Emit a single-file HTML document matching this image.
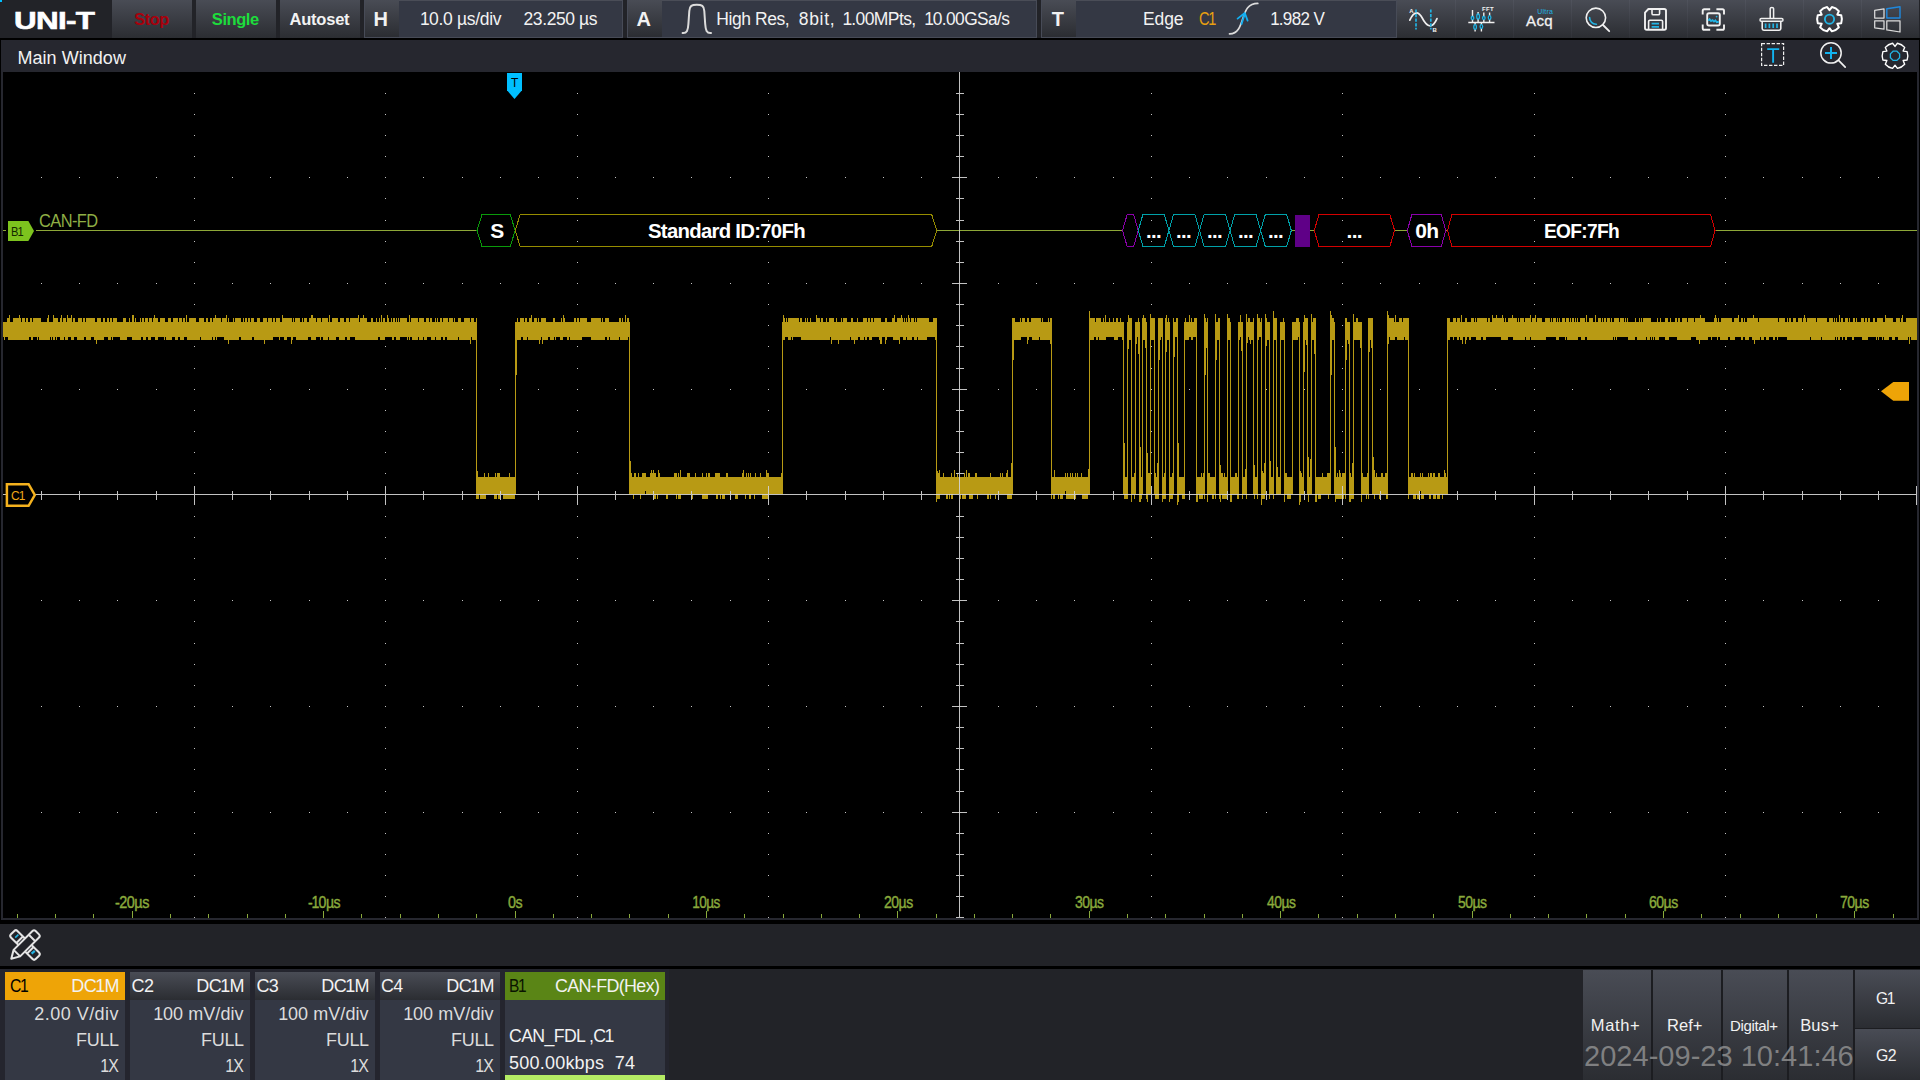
<!DOCTYPE html>
<html><head><meta charset="utf-8"><title>UNI-T Oscilloscope - Main Window</title>
<style>
html,body{margin:0;padding:0;background:#000;}
body{width:1920px;height:1080px;position:relative;overflow:hidden;font-family:"Liberation Sans",sans-serif;}
.b{position:absolute;}
.t{position:absolute;white-space:pre;font-family:"Liberation Sans",sans-serif;}
.plot{position:absolute;left:0;top:0;}
.n1{margin:0 -0.02em 0 -0.05em;}
</style></head><body>
<div class="b" style="left:0px;top:0px;width:1920px;height:38px;background:#222328;"></div>
<div class="b" style="left:112px;top:0px;width:80px;height:38px;background:linear-gradient(#494c55,#2b2d32);"></div>
<div class="b" style="left:196px;top:0px;width:80px;height:38px;background:linear-gradient(#494c55,#2b2d32);"></div>
<div class="b" style="left:280px;top:0px;width:80px;height:38px;background:linear-gradient(#494c55,#2b2d32);"></div>
<div class="b" style="left:0px;top:0px;width:2px;height:2px;background:#00bfff;"></div>
<div class="b" style="left:364px;top:0px;width:259px;height:38px;background:#474b57;"></div>
<div class="b" style="left:365px;top:0px;width:34px;height:37px;background:linear-gradient(#494c55,#2b2d32);"></div>
<div class="b" style="left:399px;top:1px;width:223px;height:36px;background:#343844;"></div>
<div class="b" style="left:399px;top:0px;width:223px;height:1px;background:#4a4d57;"></div>
<div class="b" style="left:627px;top:0px;width:410px;height:38px;background:#474b57;"></div>
<div class="b" style="left:628px;top:0px;width:34px;height:37px;background:linear-gradient(#494c55,#2b2d32);"></div>
<div class="b" style="left:662px;top:1px;width:374px;height:36px;background:#343844;"></div>
<div class="b" style="left:662px;top:0px;width:374px;height:1px;background:#4a4d57;"></div>
<div class="b" style="left:1041px;top:0px;width:356px;height:38px;background:#474b57;"></div>
<div class="b" style="left:1042px;top:0px;width:34px;height:37px;background:linear-gradient(#494c55,#2b2d32);"></div>
<div class="b" style="left:1076px;top:1px;width:320px;height:36px;background:#343844;"></div>
<div class="b" style="left:1076px;top:0px;width:320px;height:1px;background:#4a4d57;"></div>
<div class="b" style="left:1397px;top:0px;width:522px;height:38px;background:linear-gradient(#494c55,#2b2d32);"></div>
<div class="b" style="left:1455px;top:0px;width:1px;height:38px;background:linear-gradient(#50535d,#303238);"></div>
<div class="b" style="left:1513px;top:0px;width:1px;height:38px;background:linear-gradient(#50535d,#303238);"></div>
<div class="b" style="left:1571px;top:0px;width:1px;height:38px;background:linear-gradient(#50535d,#303238);"></div>
<div class="b" style="left:1629px;top:0px;width:1px;height:38px;background:linear-gradient(#50535d,#303238);"></div>
<div class="b" style="left:1687px;top:0px;width:1px;height:38px;background:linear-gradient(#50535d,#303238);"></div>
<div class="b" style="left:1745px;top:0px;width:1px;height:38px;background:linear-gradient(#50535d,#303238);"></div>
<div class="b" style="left:1803px;top:0px;width:1px;height:38px;background:linear-gradient(#50535d,#303238);"></div>
<div class="b" style="left:1861px;top:0px;width:1px;height:38px;background:linear-gradient(#50535d,#303238);"></div>
<div class="b" style="left:0px;top:38px;width:1920px;height:2px;background:#000;"></div>
<div class="b" style="left:1px;top:40px;width:1918px;height:880px;background:#26272f;"></div>
<div class="b" style="left:3px;top:72px;width:1914px;height:846px;background:#000;"></div>
<div class="b" style="left:0px;top:920px;width:1920px;height:4px;background:#000;"></div>
<div class="b" style="left:0px;top:924px;width:1920px;height:42px;background:#222328;"></div>
<div class="b" style="left:0px;top:966px;width:1920px;height:3px;background:#000;"></div>
<div class="b" style="left:0px;top:969px;width:1920px;height:111px;background:#222328;"></div>
<div class="b" style="left:0px;top:969px;width:669px;height:111px;background:#24252e;"></div>
<div class="b" style="left:5px;top:972px;width:120px;height:28px;background:#eea407;"></div>
<div class="b" style="left:5px;top:1000px;width:120px;height:80px;background:#343844;"></div>
<div class="b" style="left:130px;top:972px;width:120px;height:28px;background:linear-gradient(#494c55,#2b2d32);"></div>
<div class="b" style="left:130px;top:1000px;width:120px;height:80px;background:#343844;"></div>
<div class="b" style="left:255px;top:972px;width:120px;height:28px;background:linear-gradient(#494c55,#2b2d32);"></div>
<div class="b" style="left:255px;top:1000px;width:120px;height:80px;background:#343844;"></div>
<div class="b" style="left:380px;top:972px;width:120px;height:28px;background:linear-gradient(#494c55,#2b2d32);"></div>
<div class="b" style="left:380px;top:1000px;width:120px;height:80px;background:#343844;"></div>
<div class="b" style="left:505px;top:972px;width:160px;height:28px;background:#5a8516;"></div>
<div class="b" style="left:505px;top:1000px;width:160px;height:75px;background:#343844;"></div>
<div class="b" style="left:505px;top:1075px;width:160px;height:5px;background:#b4eb64;"></div>
<div class="b" style="left:1583px;top:970px;width:337px;height:110px;background:#1c1d21;"></div>
<div class="b" style="left:1583px;top:970px;width:68px;height:110px;background:linear-gradient(#494c55,#2b2d32);"></div>
<div class="b" style="left:1653px;top:970px;width:68px;height:110px;background:linear-gradient(#494c55,#2b2d32);"></div>
<div class="b" style="left:1723px;top:970px;width:64px;height:110px;background:linear-gradient(#494c55,#2b2d32);"></div>
<div class="b" style="left:1789px;top:970px;width:64px;height:110px;background:linear-gradient(#494c55,#2b2d32);"></div>
<div class="b" style="left:1855px;top:970px;width:65px;height:58px;background:linear-gradient(#494c55,#2b2d32);"></div>
<div class="b" style="left:1855px;top:1029px;width:65px;height:51px;background:linear-gradient(#494c55,#2b2d32);"></div>
<svg class="plot" width="1920" height="1080" viewBox="0 0 1920 1080" shape-rendering="crispEdges"><path d="M41 177h1v1h-1zM79 177h1v1h-1zM117 177h1v1h-1zM156 177h1v1h-1zM194 177h1v1h-1zM232 177h1v1h-1zM270 177h1v1h-1zM309 177h1v1h-1zM347 177h1v1h-1zM385 177h1v1h-1zM423 177h1v1h-1zM462 177h1v1h-1zM500 177h1v1h-1zM538 177h1v1h-1zM577 177h1v1h-1zM615 177h1v1h-1zM653 177h1v1h-1zM691 177h1v1h-1zM730 177h1v1h-1zM768 177h1v1h-1zM806 177h1v1h-1zM845 177h1v1h-1zM883 177h1v1h-1zM921 177h1v1h-1zM959 177h1v1h-1zM998 177h1v1h-1zM1036 177h1v1h-1zM1074 177h1v1h-1zM1113 177h1v1h-1zM1151 177h1v1h-1zM1189 177h1v1h-1zM1227 177h1v1h-1zM1266 177h1v1h-1zM1304 177h1v1h-1zM1342 177h1v1h-1zM1380 177h1v1h-1zM1419 177h1v1h-1zM1457 177h1v1h-1zM1495 177h1v1h-1zM1534 177h1v1h-1zM1572 177h1v1h-1zM1610 177h1v1h-1zM1648 177h1v1h-1zM1687 177h1v1h-1zM1725 177h1v1h-1zM1763 177h1v1h-1zM1802 177h1v1h-1zM1840 177h1v1h-1zM1878 177h1v1h-1zM41 283h1v1h-1zM79 283h1v1h-1zM117 283h1v1h-1zM156 283h1v1h-1zM194 283h1v1h-1zM232 283h1v1h-1zM270 283h1v1h-1zM309 283h1v1h-1zM347 283h1v1h-1zM385 283h1v1h-1zM423 283h1v1h-1zM462 283h1v1h-1zM500 283h1v1h-1zM538 283h1v1h-1zM577 283h1v1h-1zM615 283h1v1h-1zM653 283h1v1h-1zM691 283h1v1h-1zM730 283h1v1h-1zM768 283h1v1h-1zM806 283h1v1h-1zM845 283h1v1h-1zM883 283h1v1h-1zM921 283h1v1h-1zM959 283h1v1h-1zM998 283h1v1h-1zM1036 283h1v1h-1zM1074 283h1v1h-1zM1113 283h1v1h-1zM1151 283h1v1h-1zM1189 283h1v1h-1zM1227 283h1v1h-1zM1266 283h1v1h-1zM1304 283h1v1h-1zM1342 283h1v1h-1zM1380 283h1v1h-1zM1419 283h1v1h-1zM1457 283h1v1h-1zM1495 283h1v1h-1zM1534 283h1v1h-1zM1572 283h1v1h-1zM1610 283h1v1h-1zM1648 283h1v1h-1zM1687 283h1v1h-1zM1725 283h1v1h-1zM1763 283h1v1h-1zM1802 283h1v1h-1zM1840 283h1v1h-1zM1878 283h1v1h-1zM41 389h1v1h-1zM79 389h1v1h-1zM117 389h1v1h-1zM156 389h1v1h-1zM194 389h1v1h-1zM232 389h1v1h-1zM270 389h1v1h-1zM309 389h1v1h-1zM347 389h1v1h-1zM385 389h1v1h-1zM423 389h1v1h-1zM462 389h1v1h-1zM500 389h1v1h-1zM538 389h1v1h-1zM577 389h1v1h-1zM615 389h1v1h-1zM653 389h1v1h-1zM691 389h1v1h-1zM730 389h1v1h-1zM768 389h1v1h-1zM806 389h1v1h-1zM845 389h1v1h-1zM883 389h1v1h-1zM921 389h1v1h-1zM959 389h1v1h-1zM998 389h1v1h-1zM1036 389h1v1h-1zM1074 389h1v1h-1zM1113 389h1v1h-1zM1151 389h1v1h-1zM1189 389h1v1h-1zM1227 389h1v1h-1zM1266 389h1v1h-1zM1304 389h1v1h-1zM1342 389h1v1h-1zM1380 389h1v1h-1zM1419 389h1v1h-1zM1457 389h1v1h-1zM1495 389h1v1h-1zM1534 389h1v1h-1zM1572 389h1v1h-1zM1610 389h1v1h-1zM1648 389h1v1h-1zM1687 389h1v1h-1zM1725 389h1v1h-1zM1763 389h1v1h-1zM1802 389h1v1h-1zM1840 389h1v1h-1zM1878 389h1v1h-1zM41 600h1v1h-1zM79 600h1v1h-1zM117 600h1v1h-1zM156 600h1v1h-1zM194 600h1v1h-1zM232 600h1v1h-1zM270 600h1v1h-1zM309 600h1v1h-1zM347 600h1v1h-1zM385 600h1v1h-1zM423 600h1v1h-1zM462 600h1v1h-1zM500 600h1v1h-1zM538 600h1v1h-1zM577 600h1v1h-1zM615 600h1v1h-1zM653 600h1v1h-1zM691 600h1v1h-1zM730 600h1v1h-1zM768 600h1v1h-1zM806 600h1v1h-1zM845 600h1v1h-1zM883 600h1v1h-1zM921 600h1v1h-1zM959 600h1v1h-1zM998 600h1v1h-1zM1036 600h1v1h-1zM1074 600h1v1h-1zM1113 600h1v1h-1zM1151 600h1v1h-1zM1189 600h1v1h-1zM1227 600h1v1h-1zM1266 600h1v1h-1zM1304 600h1v1h-1zM1342 600h1v1h-1zM1380 600h1v1h-1zM1419 600h1v1h-1zM1457 600h1v1h-1zM1495 600h1v1h-1zM1534 600h1v1h-1zM1572 600h1v1h-1zM1610 600h1v1h-1zM1648 600h1v1h-1zM1687 600h1v1h-1zM1725 600h1v1h-1zM1763 600h1v1h-1zM1802 600h1v1h-1zM1840 600h1v1h-1zM1878 600h1v1h-1zM41 706h1v1h-1zM79 706h1v1h-1zM117 706h1v1h-1zM156 706h1v1h-1zM194 706h1v1h-1zM232 706h1v1h-1zM270 706h1v1h-1zM309 706h1v1h-1zM347 706h1v1h-1zM385 706h1v1h-1zM423 706h1v1h-1zM462 706h1v1h-1zM500 706h1v1h-1zM538 706h1v1h-1zM577 706h1v1h-1zM615 706h1v1h-1zM653 706h1v1h-1zM691 706h1v1h-1zM730 706h1v1h-1zM768 706h1v1h-1zM806 706h1v1h-1zM845 706h1v1h-1zM883 706h1v1h-1zM921 706h1v1h-1zM959 706h1v1h-1zM998 706h1v1h-1zM1036 706h1v1h-1zM1074 706h1v1h-1zM1113 706h1v1h-1zM1151 706h1v1h-1zM1189 706h1v1h-1zM1227 706h1v1h-1zM1266 706h1v1h-1zM1304 706h1v1h-1zM1342 706h1v1h-1zM1380 706h1v1h-1zM1419 706h1v1h-1zM1457 706h1v1h-1zM1495 706h1v1h-1zM1534 706h1v1h-1zM1572 706h1v1h-1zM1610 706h1v1h-1zM1648 706h1v1h-1zM1687 706h1v1h-1zM1725 706h1v1h-1zM1763 706h1v1h-1zM1802 706h1v1h-1zM1840 706h1v1h-1zM1878 706h1v1h-1zM41 812h1v1h-1zM79 812h1v1h-1zM117 812h1v1h-1zM156 812h1v1h-1zM194 812h1v1h-1zM232 812h1v1h-1zM270 812h1v1h-1zM309 812h1v1h-1zM347 812h1v1h-1zM385 812h1v1h-1zM423 812h1v1h-1zM462 812h1v1h-1zM500 812h1v1h-1zM538 812h1v1h-1zM577 812h1v1h-1zM615 812h1v1h-1zM653 812h1v1h-1zM691 812h1v1h-1zM730 812h1v1h-1zM768 812h1v1h-1zM806 812h1v1h-1zM845 812h1v1h-1zM883 812h1v1h-1zM921 812h1v1h-1zM959 812h1v1h-1zM998 812h1v1h-1zM1036 812h1v1h-1zM1074 812h1v1h-1zM1113 812h1v1h-1zM1151 812h1v1h-1zM1189 812h1v1h-1zM1227 812h1v1h-1zM1266 812h1v1h-1zM1304 812h1v1h-1zM1342 812h1v1h-1zM1380 812h1v1h-1zM1419 812h1v1h-1zM1457 812h1v1h-1zM1495 812h1v1h-1zM1534 812h1v1h-1zM1572 812h1v1h-1zM1610 812h1v1h-1zM1648 812h1v1h-1zM1687 812h1v1h-1zM1725 812h1v1h-1zM1763 812h1v1h-1zM1802 812h1v1h-1zM1840 812h1v1h-1zM1878 812h1v1h-1zM194 93h1v1h-1zM194 114h1v1h-1zM194 135h1v1h-1zM194 156h1v1h-1zM194 177h1v1h-1zM194 198h1v1h-1zM194 220h1v1h-1zM194 241h1v1h-1zM194 262h1v1h-1zM194 283h1v1h-1zM194 304h1v1h-1zM194 325h1v1h-1zM194 346h1v1h-1zM194 368h1v1h-1zM194 389h1v1h-1zM194 410h1v1h-1zM194 431h1v1h-1zM194 452h1v1h-1zM194 473h1v1h-1zM194 516h1v1h-1zM194 537h1v1h-1zM194 558h1v1h-1zM194 579h1v1h-1zM194 600h1v1h-1zM194 621h1v1h-1zM194 643h1v1h-1zM194 664h1v1h-1zM194 685h1v1h-1zM194 706h1v1h-1zM194 727h1v1h-1zM194 748h1v1h-1zM194 769h1v1h-1zM194 791h1v1h-1zM194 812h1v1h-1zM194 833h1v1h-1zM194 854h1v1h-1zM194 875h1v1h-1zM194 896h1v1h-1zM194 917h1v1h-1zM385 93h1v1h-1zM385 114h1v1h-1zM385 135h1v1h-1zM385 156h1v1h-1zM385 177h1v1h-1zM385 198h1v1h-1zM385 220h1v1h-1zM385 241h1v1h-1zM385 262h1v1h-1zM385 283h1v1h-1zM385 304h1v1h-1zM385 325h1v1h-1zM385 346h1v1h-1zM385 368h1v1h-1zM385 389h1v1h-1zM385 410h1v1h-1zM385 431h1v1h-1zM385 452h1v1h-1zM385 473h1v1h-1zM385 516h1v1h-1zM385 537h1v1h-1zM385 558h1v1h-1zM385 579h1v1h-1zM385 600h1v1h-1zM385 621h1v1h-1zM385 643h1v1h-1zM385 664h1v1h-1zM385 685h1v1h-1zM385 706h1v1h-1zM385 727h1v1h-1zM385 748h1v1h-1zM385 769h1v1h-1zM385 791h1v1h-1zM385 812h1v1h-1zM385 833h1v1h-1zM385 854h1v1h-1zM385 875h1v1h-1zM385 896h1v1h-1zM385 917h1v1h-1zM577 93h1v1h-1zM577 114h1v1h-1zM577 135h1v1h-1zM577 156h1v1h-1zM577 177h1v1h-1zM577 198h1v1h-1zM577 220h1v1h-1zM577 241h1v1h-1zM577 262h1v1h-1zM577 283h1v1h-1zM577 304h1v1h-1zM577 325h1v1h-1zM577 346h1v1h-1zM577 368h1v1h-1zM577 389h1v1h-1zM577 410h1v1h-1zM577 431h1v1h-1zM577 452h1v1h-1zM577 473h1v1h-1zM577 516h1v1h-1zM577 537h1v1h-1zM577 558h1v1h-1zM577 579h1v1h-1zM577 600h1v1h-1zM577 621h1v1h-1zM577 643h1v1h-1zM577 664h1v1h-1zM577 685h1v1h-1zM577 706h1v1h-1zM577 727h1v1h-1zM577 748h1v1h-1zM577 769h1v1h-1zM577 791h1v1h-1zM577 812h1v1h-1zM577 833h1v1h-1zM577 854h1v1h-1zM577 875h1v1h-1zM577 896h1v1h-1zM577 917h1v1h-1zM768 93h1v1h-1zM768 114h1v1h-1zM768 135h1v1h-1zM768 156h1v1h-1zM768 177h1v1h-1zM768 198h1v1h-1zM768 220h1v1h-1zM768 241h1v1h-1zM768 262h1v1h-1zM768 283h1v1h-1zM768 304h1v1h-1zM768 325h1v1h-1zM768 346h1v1h-1zM768 368h1v1h-1zM768 389h1v1h-1zM768 410h1v1h-1zM768 431h1v1h-1zM768 452h1v1h-1zM768 473h1v1h-1zM768 516h1v1h-1zM768 537h1v1h-1zM768 558h1v1h-1zM768 579h1v1h-1zM768 600h1v1h-1zM768 621h1v1h-1zM768 643h1v1h-1zM768 664h1v1h-1zM768 685h1v1h-1zM768 706h1v1h-1zM768 727h1v1h-1zM768 748h1v1h-1zM768 769h1v1h-1zM768 791h1v1h-1zM768 812h1v1h-1zM768 833h1v1h-1zM768 854h1v1h-1zM768 875h1v1h-1zM768 896h1v1h-1zM768 917h1v1h-1zM1151 93h1v1h-1zM1151 114h1v1h-1zM1151 135h1v1h-1zM1151 156h1v1h-1zM1151 177h1v1h-1zM1151 198h1v1h-1zM1151 220h1v1h-1zM1151 241h1v1h-1zM1151 262h1v1h-1zM1151 283h1v1h-1zM1151 304h1v1h-1zM1151 325h1v1h-1zM1151 346h1v1h-1zM1151 368h1v1h-1zM1151 389h1v1h-1zM1151 410h1v1h-1zM1151 431h1v1h-1zM1151 452h1v1h-1zM1151 473h1v1h-1zM1151 516h1v1h-1zM1151 537h1v1h-1zM1151 558h1v1h-1zM1151 579h1v1h-1zM1151 600h1v1h-1zM1151 621h1v1h-1zM1151 643h1v1h-1zM1151 664h1v1h-1zM1151 685h1v1h-1zM1151 706h1v1h-1zM1151 727h1v1h-1zM1151 748h1v1h-1zM1151 769h1v1h-1zM1151 791h1v1h-1zM1151 812h1v1h-1zM1151 833h1v1h-1zM1151 854h1v1h-1zM1151 875h1v1h-1zM1151 896h1v1h-1zM1151 917h1v1h-1zM1342 93h1v1h-1zM1342 114h1v1h-1zM1342 135h1v1h-1zM1342 156h1v1h-1zM1342 177h1v1h-1zM1342 198h1v1h-1zM1342 220h1v1h-1zM1342 241h1v1h-1zM1342 262h1v1h-1zM1342 283h1v1h-1zM1342 304h1v1h-1zM1342 325h1v1h-1zM1342 346h1v1h-1zM1342 368h1v1h-1zM1342 389h1v1h-1zM1342 410h1v1h-1zM1342 431h1v1h-1zM1342 452h1v1h-1zM1342 473h1v1h-1zM1342 516h1v1h-1zM1342 537h1v1h-1zM1342 558h1v1h-1zM1342 579h1v1h-1zM1342 600h1v1h-1zM1342 621h1v1h-1zM1342 643h1v1h-1zM1342 664h1v1h-1zM1342 685h1v1h-1zM1342 706h1v1h-1zM1342 727h1v1h-1zM1342 748h1v1h-1zM1342 769h1v1h-1zM1342 791h1v1h-1zM1342 812h1v1h-1zM1342 833h1v1h-1zM1342 854h1v1h-1zM1342 875h1v1h-1zM1342 896h1v1h-1zM1342 917h1v1h-1zM1534 93h1v1h-1zM1534 114h1v1h-1zM1534 135h1v1h-1zM1534 156h1v1h-1zM1534 177h1v1h-1zM1534 198h1v1h-1zM1534 220h1v1h-1zM1534 241h1v1h-1zM1534 262h1v1h-1zM1534 283h1v1h-1zM1534 304h1v1h-1zM1534 325h1v1h-1zM1534 346h1v1h-1zM1534 368h1v1h-1zM1534 389h1v1h-1zM1534 410h1v1h-1zM1534 431h1v1h-1zM1534 452h1v1h-1zM1534 473h1v1h-1zM1534 516h1v1h-1zM1534 537h1v1h-1zM1534 558h1v1h-1zM1534 579h1v1h-1zM1534 600h1v1h-1zM1534 621h1v1h-1zM1534 643h1v1h-1zM1534 664h1v1h-1zM1534 685h1v1h-1zM1534 706h1v1h-1zM1534 727h1v1h-1zM1534 748h1v1h-1zM1534 769h1v1h-1zM1534 791h1v1h-1zM1534 812h1v1h-1zM1534 833h1v1h-1zM1534 854h1v1h-1zM1534 875h1v1h-1zM1534 896h1v1h-1zM1534 917h1v1h-1zM1725 93h1v1h-1zM1725 114h1v1h-1zM1725 135h1v1h-1zM1725 156h1v1h-1zM1725 177h1v1h-1zM1725 198h1v1h-1zM1725 220h1v1h-1zM1725 241h1v1h-1zM1725 262h1v1h-1zM1725 283h1v1h-1zM1725 304h1v1h-1zM1725 325h1v1h-1zM1725 346h1v1h-1zM1725 368h1v1h-1zM1725 389h1v1h-1zM1725 410h1v1h-1zM1725 431h1v1h-1zM1725 452h1v1h-1zM1725 473h1v1h-1zM1725 516h1v1h-1zM1725 537h1v1h-1zM1725 558h1v1h-1zM1725 579h1v1h-1zM1725 600h1v1h-1zM1725 621h1v1h-1zM1725 643h1v1h-1zM1725 664h1v1h-1zM1725 685h1v1h-1zM1725 706h1v1h-1zM1725 727h1v1h-1zM1725 748h1v1h-1zM1725 769h1v1h-1zM1725 791h1v1h-1zM1725 812h1v1h-1zM1725 833h1v1h-1zM1725 854h1v1h-1zM1725 875h1v1h-1zM1725 896h1v1h-1zM1725 917h1v1h-1z" fill="#c4c4c4"/><rect x="3.0" y="230" width="3.0" height="1" fill="#8ea838"/><rect x="36.0" y="230" width="441.0" height="1" fill="#8ea838"/><rect x="936.7" y="230" width="185.8" height="1" fill="#8ea838"/><rect x="1291.2" y="230" width="3.8" height="1" fill="#8ea838"/><rect x="1310.0" y="230" width="4.2" height="1" fill="#8ea838"/><rect x="1394.6" y="230" width="12.7" height="1" fill="#8ea838"/><rect x="1445.8" y="230" width="1.7" height="1" fill="#8ea838"/><rect x="1715.0" y="230" width="202.0" height="1" fill="#8ea838"/><path d="M477.0 230.5L482.0 214.5H510.2L515.2 230.5L510.2 246.5H482.0Z" fill="none" stroke="#0a9a0a" stroke-width="1"/><path d="M515.2 230.5L520.2 214.5H931.7L936.7 230.5L931.7 246.5H520.2Z" fill="none" stroke="#968c00" stroke-width="1"/><path d="M1122.5 230.5L1127.2 214.5H1133.6L1138.3 230.5L1133.6 246.5H1127.2Z" fill="none" stroke="#8a00aa" stroke-width="1"/><path d="M1138.3 230.5L1142.9 214.5H1164.3L1168.9 230.5L1164.3 246.5H1142.9Z" fill="none" stroke="#00a0a8" stroke-width="1"/><path d="M1168.9 230.5L1173.5 214.5H1194.9L1199.5 230.5L1194.9 246.5H1173.5Z" fill="none" stroke="#00a0a8" stroke-width="1"/><path d="M1199.5 230.5L1204.1 214.5H1225.5L1230.1 230.5L1225.5 246.5H1204.1Z" fill="none" stroke="#00a0a8" stroke-width="1"/><path d="M1230.1 230.5L1234.7 214.5H1256.1L1260.7 230.5L1256.1 246.5H1234.7Z" fill="none" stroke="#00a0a8" stroke-width="1"/><path d="M1260.7 230.5L1265.3 214.5H1286.7L1291.3 230.5L1286.7 246.5H1265.3Z" fill="none" stroke="#00a0a8" stroke-width="1"/><rect x="1295" y="215" width="15" height="32" fill="#5f0087"/><path d="M1314.2 230.5L1319.0 214.5H1389.8L1394.6 230.5L1389.8 246.5H1319.0Z" fill="none" stroke="#d40000" stroke-width="1"/><path d="M1407.3 230.5L1411.9 214.5H1441.2L1445.8 230.5L1441.2 246.5H1411.9Z" fill="none" stroke="#8a00aa" stroke-width="1"/><path d="M1447.5 230.5L1451.9 214.5H1710.6L1715.0 230.5L1710.6 246.5H1451.9Z" fill="none" stroke="#d40000" stroke-width="1"/><path d="M3 322h4v-4h2v-3h1v7h3v-4h6v-3h1v3h1v4h1v-4h3v4h1v-4h2v4h2v-4h2v4h1v-4h8v4h6v-4h1v-3h1v7h4v-7h1v3h4v4h2v-4h1v-3h1v7h1v-4h3v4h1v-7h1v3h3v-3h1v7h1v-4h2v4h3v-4h4v4h1v-4h2v4h1v-4h9v4h2v-4h4v4h2v-4h2v4h2v-4h2v4h1v-4h2v4h1v-4h4v4h6v-4h3v4h3v-4h1v4h2v-7h2v7h1v-4h1v4h4v-4h1v4h1v-4h2v4h1v-4h3v4h1v-4h3v4h1v-4h1v-3h1v3h3v4h2v-4h5v4h3v-4h3v4h2v-4h5v4h1v-4h3v4h1v-4h2v4h1v-7h1v7h2v-4h7v4h3v-4h5v4h2v-4h2v4h2v-4h2v4h1v-4h2v-3h1v3h5v4h1v-4h4v-3h1v7h1v-4h1v4h4v-4h1v4h1v-4h6v4h2v-4h1v4h1v-4h2v4h1v-4h2v4h1v-4h3v4h3v-4h3v4h3v-4h4v4h1v-4h4v4h1v-4h2v4h1v-4h4v4h2v-7h1v3h9v4h1v-4h1v4h1v-4h5v4h2v-4h1v4h1v-4h3v4h2v-4h2v-3h2v3h3v4h1v-4h4v4h1v-4h6v4h1v-7h1v7h2v-4h6v4h2v-4h4v4h2v-4h3v4h1v-4h8v-3h1v7h1v-4h3v-3h1v3h3v4h4v-4h2v4h3v-4h1v4h2v-4h1v4h1v-7h1v7h1v-4h2v4h2v-7h1v3h1v4h2v-4h1v4h1v-4h2v4h1v-4h1v4h1v-4h1v4h1v-4h7v4h2v-7h1v7h1v-4h7v4h1v-4h5v4h2v-4h3v4h1v-4h2v4h3v-4h1v4h1v-4h1v4h2v-4h2v4h1v-4h5v4h1v-4h4v4h1v-4h1v4h3v-4h3v4h3v-4h6v4h1v-4h3v4h2v-4h1v153h1v6h6v-4h1v4h3v-4h1v4h6v-4h1v4h1v-4h3v4h9v-4h1v4h5v-155h2v-4h1v4h2v-4h4v4h1v-4h2v4h2v-4h2v-3h1v7h2v-4h3v4h1v-4h1v4h2v-4h5v4h7v-4h2v4h6v-4h1v4h1v-7h1v3h1v4h9v-4h2v4h1v-4h2v4h1v-4h7v4h4v-4h10v4h1v-4h1v4h2v-4h4v4h10v-4h2v4h1v-4h1v4h2v-7h1v7h1v-4h2v4h1v139h1v12h1v4h2v-4h2v4h2v-4h1v4h3v-4h4v4h4v-4h1v-3h1v3h1v-3h1v3h2v4h2v-7h1v3h1v4h14v-4h3v4h1v-4h1v4h1v-7h1v7h6v-4h3v4h5v-4h1v4h6v-4h1v4h3v-4h1v4h1v-4h2v4h5v-4h5v4h6v-4h2v4h14v-4h1v-3h1v7h2v-4h1v4h1v-4h1v4h1v-4h1v4h4v-4h1v4h4v-4h1v4h5v-7h1v3h2v4h12v-4h1v-151h1v-7h1v3h1v4h1v-4h1v4h1v-4h11v4h1v-4h2v4h3v-4h1v4h1v-4h1v4h2v-4h1v4h5v-7h1v3h3v4h1v-4h2v4h3v-4h1v4h2v-4h5v4h2v-4h1v4h4v-4h1v4h1v-4h4v4h4v-4h2v4h4v-4h1v4h5v-4h4v4h1v-4h2v4h1v-4h2v4h1v-4h7v4h4v-4h2v4h5v-4h2v-3h1v7h2v-4h4v-3h1v3h1v4h1v-4h1v4h1v-4h1v4h1v-7h1v3h1v4h1v-4h3v4h1v-4h1v4h1v-4h12v4h4v-4h4v153h1v2h1v-3h1v7h3v-4h1v4h7v-4h1v4h2v-7h1v7h2v-4h1v4h6v-4h1v4h1v-7h1v7h1v-4h2v4h5v-4h2v4h13v-4h1v4h9v-4h1v4h1v-4h1v4h3v-4h1v-3h1v7h3v-14h1v-145h3v4h5v-4h1v4h1v-4h3v4h2v-4h2v4h2v-4h10v4h1v-4h1v4h5v-4h1v4h1v-4h2v159h2v-7h1v7h10v-4h1v4h1v-4h1v4h2v-4h1v4h1v-4h1v4h2v-4h1v4h1v-4h1v4h3v-4h1v4h6v-8h1v-158h1v7h5v4h1v-4h5v4h2v-4h1v4h1v-7h1v7h3v-4h1v4h3v-4h1v4h2v-4h2v4h2v-4h1v4h3v121h1v34h2v-155h1v-7h1v3h3v159h2v-4h1v-151h3v-4h1v4h1v125h1v30h1v-159h1v-3h1v3h2v4h1v131h1v20h2v-159h1v4h4v155h1v4h1v-14h1v-145h5v159h1v-4h1v-155h1v-3h1v7h1v-4h1v4h1v155h2v-4h1v-155h1v4h2v-4h2v125h1v34h5v-155h1v-4h1v4h3v-7h1v7h1v-4h1v4h2v-4h3v159h4v-4h1v4h1v-4h1v-159h1v4h1v4h1v-4h1v155h2v4h5v-163h1v8h2v-4h2v147h1v8h2v4h1v-4h1v4h2v-163h1v4h2v4h1v155h4v-4h2v4h1v-155h2v-7h1v7h2v155h2v-8h1v-155h1v8h1v-4h2v4h3v-4h1v147h1v12h2v-163h1v4h2v4h1v-4h1v153h1v2h1v-10h1v-149h1v4h1v4h3v139h1v16h2v-166h1v7h3v149h1v10h2v-155h3v-4h1v4h1v151h2v4h5v-155h4v-4h3v4h1v149h1v2h1v4h1v-155h1v-7h1v3h3v139h1v20h1v-18h1v-145h1v8h1v-4h3v159h6v-4h1v4h4v-4h3v-162h1v4h1v3h2v4h1v125h1v30h1v-4h1v4h1v-7h1v3h1v4h1v-4h3v-155h2v4h3v151h1v4h1v-14h1v-149h1v8h2v-4h2v4h4v151h1v4h4v-4h1v-155h5v139h1v13h1v7h1v-4h1v4h4v-4h2v4h2v-4h2v-162h1v4h1v3h5v4h1v-7h1v7h3v-4h3v4h1v-4h6v159h2v-4h2v4h1v-4h1v4h5v-4h1v4h1v-4h1v4h5v-4h1v4h1v-4h2v4h1v-4h2v4h3v-4h2v4h4v-7h1v3h1v4h1v-159h3v4h3v-4h3v4h1v-4h3v4h1v-7h1v7h3v-4h2v4h4v-4h3v4h1v-4h1v4h1v-4h10v4h1v-4h2v4h2v-7h1v3h3v-3h1v3h5v-3h1v3h1v4h1v-4h1v4h2v-4h4v-3h1v3h4v4h1v-4h1v4h1v-4h4v4h1v-4h5v-3h1v7h1v-4h3v-3h1v7h1v-4h5v4h3v-4h5v4h1v-4h1v4h1v-4h3v4h1v-4h1v4h1v-4h1v4h2v-4h3v4h1v-4h3v4h1v-4h1v4h1v-4h2v4h1v-4h1v4h1v-4h1v4h2v-4h5v4h1v-7h1v7h2v-4h4v4h2v-7h1v7h2v-4h3v4h1v-4h1v4h1v-4h2v4h1v-4h3v4h1v-4h1v4h2v-4h5v4h1v-4h4v4h1v-4h1v4h1v-4h1v4h7v-4h1v4h3v-4h1v4h1v-4h1v4h1v-4h8v4h6v-4h1v4h2v-4h1v4h4v-4h3v4h2v-4h1v4h4v-4h2v4h1v-4h2v4h2v-4h5v4h1v-4h6v4h1v-4h5v-3h1v3h4v4h9v-4h1v-3h1v3h1v4h1v-4h1v4h2v-4h11v4h2v-4h4v-3h1v7h2v-4h2v4h1v-4h1v4h2v-4h6v-3h1v3h4v4h1v-4h19v4h1v-4h6v4h2v-4h1v4h1v-4h2v4h2v-4h3v4h2v-4h4v4h1v-4h1v-3h1v3h1v4h1v-4h9v4h1v-4h10v4h2v-4h4v4h1v-4h1v4h1v-4h1v4h2v-7h1v7h1v-4h2v4h2v-4h3v4h1v-4h1v4h3v-4h2v4h1v-4h1v4h4v-4h3v4h1v-4h2v4h1v-4h2v4h3v-4h2v4h2v-4h6v4h2v-7h1v3h7v4h3v-4h4v4h1v-4h1v-3h1v7h3v-4h11v22h-6v-3h-1v7h-1v-7h-1v3h-10v-3h-3v3h-3v-3h-3v3h-5v-3h-1v3h-1v-3h-3v3h-1v-3h-1v3h-1v-3h-8v3h-6v-3h-8v3h-2v-3h-5v3h-2v-3h-2v3h-1v-3h-2v3h-2v-3h-1v3h-1v-3h-1v3h-13v-3h-1v3h-10v-3h-1v3h-23v-3h-9v3h-1v-3h-2v3h-2v-3h-4v3h-3v-3h-2v3h-3v-3h-1v3h-5v4h-1v-4h-2v-3h-3v3h-4v-3h-2v3h-2v-3h-6v3h-5v-3h-2v3h-8v-3h-2v3h-1v-3h-5v3h-1v-3h-3v3h-8v4h-1v-4h-3v-3h-5v3h-14v-3h-8v3h-4v-3h-6v3h-4v-3h-1v3h-1v-3h-1v3h-1v-3h-1v3h-3v-3h-1v3h-9v-3h-2v3h-7v-3h-11v3h-1v-3h-1v3h-1v-3h-1v3h-26v-3h-2v3h-4v-3h-3v3h-11v-3h-1v3h-1v-3h-6v3h-3v-3h-10v3h-15v-3h-1v3h-4v-3h-1v3h-12v-3h-5v3h-7v-3h-15v3h-3v-3h-2v3h-5v-3h-5v3h-2v-3h-2v3h-1v4h-1v-7h-2v7h-1v-4h-2v-3h-1v3h-2v-3h-3v3h-1v-3h-3v3h-2v154h-5v5h-1v-5h-2v5h-3v-5h-1v5h-3v-5h-2v5h-2v-5h-5v5h-3v-8h-1v8h-3v-5h-1v5h-3v-5h-4v5h-1v-159h-3v-3h-1v3h-7v-3h-2v3h-5v-3h-1v7h-1v155h-2v-5h-6v5h-1v-5h-4v5h-1v-5h-2v-146h-1v-8h-1v12h-1v147h-1v-5h-1v5h-1v-5h-4v8h-1v-154h-1v-8h-6v159h-3v3h-2v-158h-1v-4h-1v20h-1v139h-1v-5h-1v5h-8v3h-1v-8h-1v-154h-2v35h-1v119h-2v5h-1v-5h-7v5h-3v-5h-1v8h-2v-148h-1v-14h-2v154h-3v8h-1v-8h-1v-149h-1v-5h-1v32h-1v122h-3v8h-1v3h-1v-168h-1v3h-5v154h-2v5h-4v-5h-2v8h-1v-162h-3v154h-5v-154h-2v159h-1v-5h-3v5h-1v-159h-2v6h-1v148h-1v5h-3v6h-1v-168h-2v3h-1v159h-1v-5h-2v5h-1v-5h-1v-154h-2v4h-1v-4h-1v-3h-1v6h-1v156h-1v-5h-3v5h-1v-148h-1v-14h-1v3h-1v159h-2v-5h-5v8h-2v-162h-2v154h-1v5h-5v-5h-1v8h-1v-3h-1v-159h-2v20h-1v139h-1v-5h-1v5h-2v-5h-4v8h-1v-154h-1v27h-1v124h-1v-5h-1v5h-4v-5h-1v8h-2v-165h-3v3h-2v-3h-2v3h-4v159h-3v-5h-3v8h-1v3h-1v-168h-2v20h-1v137h-1v5h-3v3h-1v-162h-2v12h-1v147h-3v3h-1v-165h-1v3h-1v20h-1v139h-4v-5h-1v-154h-3v154h-3v8h-1v-3h-1v-151h-1v-8h-2v154h-1v5h-1v3h-2v-148h-1v-17h-1v7h-1v150h-1v5h-1v-5h-2v8h-1v-162h-2v9h-1v150h-4v-5h-1v-154h-1v-3h-4v3h-4v-3h-8v3h-7v-3h-1v3h-2v-3h-2v3h-4v154h-2v5h-6v-5h-6v5h-10v-8h-1v3h-2v5h-3v-5h-1v5h-1v-5h-3v5h-2v-5h-1v5h-1v-155h-1v-4h-10v-3h-1v3h-7v-3h-3v3h-1v4h-1v-7h-6v3h-7v20h-1v134h-1v5h-5v-5h-11v5h-1v-5h-4v5h-1v-5h-1v5h-2v-5h-9v5h-1v-5h-4v5h-4v-5h-3v5h-4v-5h-1v5h-1v-5h-7v5h-2v-5h-1v5h-1v-5h-1v5h-2v-5h-6v5h-3v3h-1v-162h-1v-3h-8v3h-9v-3h-1v3h-3v-3h-2v3h-5v-3h-1v3h-3v-3h-3v7h-1v-4h-6v-3h-6v3h-1v4h-1v-7h-3v7h-2v-4h-1v-3h-7v3h-3v-3h-2v3h-2v-3h-1v3h-4v-3h-2v3h-3v4h-1v-4h-3v-3h-1v3h-11v4h-1v-4h-6v4h-1v-7h-1v3h-29v-3h-8v3h-1v-3h-1v3h-3v-3h-3v3h-2v154h-14v5h-7v-5h-7v5h-1v-5h-3v5h-2v-5h-3v5h-1v-5h-7v5h-3v-5h-4v5h-1v-5h-5v5h-3v-5h-1v5h-1v-5h-2v5h-2v-5h-8v5h-6v-5h-9v5h-1v-5h-11v5h-3v-5h-1v5h-1v-5h-8v5h-2v-5h-8v5h-1v-5h-1v5h-2v-5h-8v-3h-1v3h-4v5h-1v-5h-6v5h-1v-5h-4v-157h-1v3h-8v-3h-1v3h-9v-3h-1v3h-2v-3h-2v3h-14v-3h-9v3h-12v-3h-1v3h-2v-3h-4v3h-3v-3h-4v3h-1v-3h-1v3h-4v-3h-2v3h-5v4h-1v-7h-1v3h-1v4h-1v-4h-11v-3h-1v3h-4v-3h-2v3h-4v35h-1v119h-1v5h-12v-5h-3v5h-2v-5h-1v5h-3v-5h-8v5h-6v-5h-1v5h-3v-159h-4v-3h-1v7h-1v-4h-11v-3h-1v3h-11v-3h-2v3h-2v-3h-2v3h-5v-3h-1v3h-4v-3h-4v3h-3v-3h-1v3h-4v-3h-1v3h-6v-3h-2v3h-1v-3h-1v3h-1v-3h-7v3h-4v-3h-2v3h-2v-3h-7v3h-5v-3h-2v3h-23v-3h-5v3h-3v-3h-2v3h-6v-3h-3v3h-7v-3h-1v3h-5v-3h-2v3h-1v-3h-4v3h-5v-3h-3v3h-12v-3h-3v3h-1v4h-1v-7h-4v3h-3v-3h-4v3h-1v-3h-6v3h-8v4h-1v-4h-10v-3h-2v3h-11v-3h-2v3h-10v4h-1v-4h-4v-3h-7v3h-1v-3h-1v3h-2v-3h-1v3h-11v-3h-1v3h-13v-3h-3v3h-4v-3h-2v3h-3v-3h-3v3h-6v-3h-1v3h-1v-3h-6v3h-3v-3h-4v3h-3v-3h-2v3h-3v-3h-2v3h-9v-3h-5v3h-7v-3h-7v3h-1v-3h-1v3h-3v-3h-4v3h-7v4h-1v-4h-2v-3h-3v3h-5v-3h-2v3h-7v-3h-3v3h-3v-3h-3v3h-3v-3h-1v3h-4v-3h-3v3h-1v-3h-1v3h-2v-3h-1v3h-1v-3h-1v3h-11v-3h-1v3h-1v-3h-4v3h-2v-3h-2v3h-21v-3h-3v3h-1v-3h-1z" fill="#b89a14" stroke="none"/><path d="M3 494h1914v1h-1914zM959 72h1v846h-1zM41 491h1v9h-1zM79 491h1v9h-1zM117 491h1v9h-1zM156 491h1v9h-1zM194 486h1v19h-1zM232 491h1v9h-1zM270 491h1v9h-1zM309 491h1v9h-1zM347 491h1v9h-1zM385 486h1v19h-1zM423 491h1v9h-1zM462 491h1v9h-1zM500 491h1v9h-1zM538 491h1v9h-1zM577 486h1v19h-1zM615 491h1v9h-1zM653 491h1v9h-1zM691 491h1v9h-1zM730 491h1v9h-1zM768 486h1v19h-1zM806 491h1v9h-1zM845 491h1v9h-1zM883 491h1v9h-1zM921 491h1v9h-1zM998 491h1v9h-1zM1036 491h1v9h-1zM1074 491h1v9h-1zM1113 491h1v9h-1zM1151 486h1v19h-1zM1189 491h1v9h-1zM1227 491h1v9h-1zM1266 491h1v9h-1zM1304 491h1v9h-1zM1342 486h1v19h-1zM1380 491h1v9h-1zM1419 491h1v9h-1zM1457 491h1v9h-1zM1495 491h1v9h-1zM1534 486h1v19h-1zM1572 491h1v9h-1zM1610 491h1v9h-1zM1648 491h1v9h-1zM1687 491h1v9h-1zM1725 486h1v19h-1zM1763 491h1v9h-1zM1802 491h1v9h-1zM1840 491h1v9h-1zM1878 491h1v9h-1zM1916 486h1v19h-1zM956 93h8v1h-8zM956 114h8v1h-8zM956 135h8v1h-8zM956 156h8v1h-8zM952 177h15v1h-15zM956 198h8v1h-8zM956 220h8v1h-8zM956 241h8v1h-8zM956 262h8v1h-8zM952 283h15v1h-15zM956 304h8v1h-8zM956 325h8v1h-8zM956 346h8v1h-8zM956 368h8v1h-8zM952 389h15v1h-15zM956 410h8v1h-8zM956 431h8v1h-8zM956 452h8v1h-8zM956 473h8v1h-8zM956 516h8v1h-8zM956 537h8v1h-8zM956 558h8v1h-8zM956 579h8v1h-8zM952 600h15v1h-15zM956 621h8v1h-8zM956 643h8v1h-8zM956 664h8v1h-8zM956 685h8v1h-8zM952 706h15v1h-15zM956 727h8v1h-8zM956 748h8v1h-8zM956 769h8v1h-8zM956 791h8v1h-8zM952 812h15v1h-15zM956 833h8v1h-8zM956 854h8v1h-8zM956 875h8v1h-8zM956 896h8v1h-8zM956 917h8v1h-8z" fill="#d2d2d2" opacity="0.92"/><path d="M17 914h1v4h-1zM55 914h1v4h-1zM93 914h1v4h-1zM132 911h1v7h-1zM170 914h1v4h-1zM208 914h1v4h-1zM247 914h1v4h-1zM285 914h1v4h-1zM323 911h1v7h-1zM361 914h1v4h-1zM400 914h1v4h-1zM438 914h1v4h-1zM476 914h1v4h-1zM515 911h1v7h-1zM553 914h1v4h-1zM591 914h1v4h-1zM629 914h1v4h-1zM668 914h1v4h-1zM706 911h1v7h-1zM744 914h1v4h-1zM783 914h1v4h-1zM821 914h1v4h-1zM859 914h1v4h-1zM897 911h1v7h-1zM936 914h1v4h-1zM974 914h1v4h-1zM1012 914h1v4h-1zM1050 914h1v4h-1zM1089 911h1v7h-1zM1127 914h1v4h-1zM1165 914h1v4h-1zM1204 914h1v4h-1zM1242 914h1v4h-1zM1280 911h1v7h-1zM1318 914h1v4h-1zM1357 914h1v4h-1zM1395 914h1v4h-1zM1433 914h1v4h-1zM1472 911h1v7h-1zM1510 914h1v4h-1zM1548 914h1v4h-1zM1586 914h1v4h-1zM1625 914h1v4h-1zM1663 911h1v7h-1zM1701 914h1v4h-1zM1740 914h1v4h-1zM1778 914h1v4h-1zM1816 914h1v4h-1zM1854 911h1v7h-1zM1893 914h1v4h-1z" fill="#8aaa3c"/><path shape-rendering="geometricPrecision" d="M507 73H522V90.3L514.5 99L507 90.3Z" fill="#00bfff"/><path shape-rendering="geometricPrecision" d="M1881 391.3L1893.3 382H1909V400.7H1893.3Z" fill="#eea407"/><path shape-rendering="geometricPrecision" d="M8 221H28.4L34 231L28.4 241H8Z" fill="#7dc31e"/><path shape-rendering="geometricPrecision" d="M6.9 484.2H28.6L34.8 495L28.6 505.8H6.9Z" fill="#000" stroke="#f5b21e" stroke-width="2.5" stroke-linejoin="miter"/></svg>
<svg class="plot" width="1920" height="1080" viewBox="0 0 1920 1080"><path d="M1409.8 20.2C1412.5 14,1415 12.6,1417 12.8C1420.5 13.2,1422 18,1424 21C1426 24,1428 26,1430.5 25.8C1433 25.6,1435.5 22,1437 18.6" fill="none" stroke="#f0f0f0" stroke-width="1.7" stroke-linecap="round"/><path d="M1416 9.4V29.5M1430.8 9.4V29.5" stroke="#22b4e4" stroke-width="1.7" stroke-dasharray="3.2 1.4" fill="none"/><path d="M1468.3 22.5H1494.5M1472.5 10V22M1478.1 12V22M1483.8 12.5V22M1489.6 12.5V22M1475.1 23V31.5M1481.4 23V31.5" stroke="#f0f0f0" stroke-width="1.4" fill="none"/><ellipse cx="1472.5" cy="18" rx="1.3" ry="1.5" fill="#2b2d33" stroke="#22b4e4" stroke-width="1.3"/><ellipse cx="1478.1" cy="16.6" rx="1.3" ry="2.6" fill="#2b2d33" stroke="#22b4e4" stroke-width="1.3"/><ellipse cx="1483.8" cy="18" rx="1.3" ry="1.5" fill="#2b2d33" stroke="#22b4e4" stroke-width="1.3"/><ellipse cx="1489.6" cy="17.6" rx="1.3" ry="2.0" fill="#2b2d33" stroke="#22b4e4" stroke-width="1.3"/><ellipse cx="1475.1" cy="27" rx="1.3" ry="2.4" fill="#2b2d33" stroke="#22b4e4" stroke-width="1.3"/><ellipse cx="1481.4" cy="26.5" rx="1.3" ry="1.9" fill="#2b2d33" stroke="#22b4e4" stroke-width="1.3"/><circle cx="1595.9" cy="17.8" r="9.7" fill="none" stroke="#f0f0f0" stroke-width="1.6"/><path d="M1603 25L1609.2 31.2" stroke="#f0f0f0" stroke-width="1.8" stroke-linecap="round"/><path d="M1589.6 17.6A6.6 6.6 0 0 0 1596.4 24.3" fill="none" stroke="#22b4e4" stroke-width="1.6" stroke-linecap="round"/><path d="M1648.4 9H1664.2Q1666 9 1666 10.8V28Q1666 29.8 1664.2 29.8H1646.8Q1645 29.8 1645 28V12.6Z" fill="none" stroke="#f0f0f0" stroke-width="1.9" stroke-linejoin="round"/><path d="M1652 9V13.4Q1652 14.8 1653.4 14.8H1658.2Q1659.6 14.8 1659.6 13.4V9M1648.6 29.8V21.4Q1648.6 20.2 1649.8 20.2H1661.4Q1662.6 20.2 1662.6 21.4V29.8" fill="none" stroke="#f0f0f0" stroke-width="1.6" stroke-linejoin="round"/><path d="M1651.6 23.6H1659M1651.6 26.9H1659" stroke="#22b4e4" stroke-width="1.6" fill="none"/><path d="M1702.7 14.5V10.8Q1702.7 9.2 1704.3 9.2H1710.2M1716.4 9.2H1722.4Q1724 9.2 1724 10.8V14.5M1724 24.5V28.2Q1724 29.8 1722.4 29.8H1716.4M1710.2 29.8H1704.3Q1702.7 29.8 1702.7 28.2V24.5" fill="none" stroke="#f0f0f0" stroke-width="1.9"/><rect x="1707.2" y="13.3" width="12.6" height="12.2" rx="1.8" fill="none" stroke="#f0f0f0" stroke-width="1.9"/><path d="M1708.2 20.6L1709.6 19.2L1711 21L1712.6 20.2L1714 21.6L1715.4 20.4L1716.8 22.2L1718.8 21.6" fill="none" stroke="#22b4e4" stroke-width="1.8"/><circle cx="1716.6" cy="16.6" r="0.9" fill="#22b4e4"/><path d="M1770.2 18V8.6Q1770.2 7.4 1771.9 7.4Q1773.6 7.4 1773.6 8.6V18" fill="none" stroke="#f0f0f0" stroke-width="1.5"/><rect x="1760" y="18.6" width="23" height="2.6" rx="1.3" fill="none" stroke="#f0f0f0" stroke-width="1.5"/><path d="M1762.2 21.4V28.6Q1762.2 30.2 1763.8 30.2H1779.2Q1780.8 30.2 1780.8 28.6V21.4" fill="none" stroke="#f0f0f0" stroke-width="1.6"/><path d="M1765.6 23.6V28M1769.4 23.6V28M1773.2 23.6V28M1777 23.6V28" stroke="#22b4e4" stroke-width="1.7" fill="none"/><path d="M1841.22 15.16A12.4 12.4 0 0 1 1841.22 23.24L1837.29 23.70L1838.86 27.34A12.4 12.4 0 0 1 1831.87 31.37L1829.50 28.20L1827.13 31.37A12.4 12.4 0 0 1 1820.14 27.34L1821.71 23.70L1817.78 23.24A12.4 12.4 0 0 1 1817.78 15.16L1821.71 14.70L1820.14 11.06A12.4 12.4 0 0 1 1827.13 7.03L1829.50 10.20L1831.87 7.03A12.4 12.4 0 0 1 1838.86 11.06L1837.29 14.70Z" fill="none" stroke="#ffffff" stroke-width="2.0" stroke-linejoin="round"/><circle cx="1829.5" cy="19.2" r="4.6" fill="none" stroke="#22b4e4" stroke-width="1.9"/><path d="M1874.7 10.3L1884 8.9V18.1H1874.7Z" fill="none" stroke="#dcdcdc" stroke-width="1.25" stroke-linejoin="round"/><path d="M1886.8 8.7L1900 6.8V17.9H1886.8Z" fill="none" stroke="#2088dc" stroke-width="1.45" stroke-linejoin="round"/><path d="M1874.7 20.8H1884V29.2L1874.7 27.8Z" fill="none" stroke="#dcdcdc" stroke-width="1.25" stroke-linejoin="round"/><path d="M1886.8 20.8H1900V32L1886.8 29.9Z" fill="none" stroke="#dcdcdc" stroke-width="1.25" stroke-linejoin="round"/><path d="M682.6 33C687 33.4,688 30,688.4 24L689.3 11C689.8 5.6,691.6 4.8,696.8 4.8C702 4.8,703.8 5.6,704.3 11L705.2 24C705.6 30,706.6 33.4,711 33" fill="none" stroke="#dcdcdc" stroke-width="2" stroke-linecap="round"/><path d="M1229.5 33.8C1238 34,1240.5 26,1243 18C1245.6 10,1248 3.6,1257.8 3.4" fill="none" stroke="#dcdcdc" stroke-width="1.7" stroke-linecap="round"/><path d="M1237.6 18.6L1244.8 13L1247.6 20.6M1244.6 14.2L1241.6 24" fill="none" stroke="#12aef0" stroke-width="1.8" stroke-linecap="round" stroke-linejoin="round"/><rect x="1761.6" y="43.6" width="22" height="21.8" fill="none" stroke="#f0f0f0" stroke-width="1.2" stroke-dasharray="3.4 1.6"/><path d="M1767.2 49.1H1779.2M1773.1 49.1V62.8" stroke="#12b4f0" stroke-width="1.9" fill="none"/><circle cx="1831" cy="52.9" r="10.2" fill="none" stroke="#f0f0f0" stroke-width="1.5"/><path d="M1838.6 60.4L1845.2 67.2" stroke="#f0f0f0" stroke-width="1.7" stroke-linecap="round"/><path d="M1825 53H1837M1831 47V59" stroke="#12b4f0" stroke-width="2" fill="none"/><path d="M1907.10 51.63A12.8 12.8 0 0 1 1907.10 59.97L1903.14 60.50L1904.66 64.20A12.8 12.8 0 0 1 1897.44 68.36L1895.00 65.20L1892.56 68.36A12.8 12.8 0 0 1 1885.34 64.20L1886.86 60.50L1882.90 59.97A12.8 12.8 0 0 1 1882.90 51.63L1886.86 51.10L1885.34 47.40A12.8 12.8 0 0 1 1892.56 43.24L1895.00 46.40L1897.44 43.24A12.8 12.8 0 0 1 1904.66 47.40L1903.14 51.10Z" fill="none" stroke="#ffffff" stroke-width="1.4" stroke-linejoin="round"/><path d="M1890.4 53.9L1893.1 51.2H1896.9L1899.6 53.9V57.7L1896.9 60.4H1893.1L1890.4 57.7Z" fill="none" stroke="#22b4e4" stroke-width="1.3"/><g transform="translate(25 945) rotate(45)" fill="none" stroke="#e4e4e4" stroke-width="2" stroke-linejoin="round"><rect x="-17.5" y="-4.6" width="35" height="9.2" rx="2.2"/><path d="M-7.5 -4.6V4.6M7.5 -4.6V4.6" /></g><g transform="translate(25 945) rotate(-45)" fill="#222328" stroke="#e4e4e4" stroke-width="2" stroke-linejoin="round"><path d="M-11.5 -4.6H15.2Q17.4 -4.6 17.4 -2.4V2.4Q17.4 4.6 15.2 4.6H-11.5L-19.4 0Z"/><path d="M-11.5 -4.6V4.6M10 -4.6V4.6" /></g><path d="M15.2 937.6L18.4 934.6" stroke="#22b4e4" stroke-width="1.5"/><path d="M31.6 953.6L34.8 950.8" stroke="#22b4e4" stroke-width="2.2"/></svg>
<div class="t " style="left:134.23px;top:11px;font-size:16.5px;line-height:16.5px;color:#a8000c;letter-spacing:-0.489px;font-weight:bold;">Stop</div>
<div class="t " style="left:211.83px;top:11px;font-size:16.5px;line-height:16.5px;color:#1ddc3c;letter-spacing:-0.454px;font-weight:bold;">Single</div>
<div class="t " style="left:289.59px;top:11px;font-size:16.5px;line-height:16.5px;color:#f2f2f2;letter-spacing:-0.234px;font-weight:bold;">Autoset</div>
<div class="t logo" style="left:13.8px;top:9px;font-size:23.5px;line-height:24px;color:#fff;font-weight:bold;transform-origin:0 0;transform:scaleX(1.335);letter-spacing:-0.5px;-webkit-text-stroke:0.6px #fff">UNI-T</div>
<div class="t " style="left:373.45px;top:9px;font-size:20px;line-height:20px;color:#f2f2f2;letter-spacing:0.000px;font-weight:bold;">H</div>
<div class="t " style="left:420.84px;top:11px;font-size:17.5px;line-height:17.5px;color:#f2f2f2;letter-spacing:-0.303px;"><span class="n1">1</span>0.0 µs/div</div>
<div class="t " style="left:523.52px;top:11px;font-size:17.5px;line-height:17.5px;color:#f2f2f2;letter-spacing:-0.401px;">23.250 µs</div>
<div class="t " style="left:636.40px;top:9px;font-size:20px;line-height:20px;color:#f2f2f2;letter-spacing:0.000px;font-weight:bold;">A</div>
<div class="t " style="left:716.36px;top:11px;font-size:17.5px;line-height:17.5px;color:#f2f2f2;letter-spacing:-0.451px;">High Res,</div>
<div class="t " style="left:798.73px;top:11px;font-size:17.5px;line-height:17.5px;color:#f2f2f2;letter-spacing:0.691px;">8bit,</div>
<div class="t " style="left:843.34px;top:11px;font-size:17.5px;line-height:17.5px;color:#f2f2f2;letter-spacing:-0.589px;"><span class="n1">1</span>.00MPts,</div>
<div class="t " style="left:925.14px;top:11px;font-size:17.5px;line-height:17.5px;color:#f2f2f2;letter-spacing:-0.613px;transform-origin:0 50%;transform:scaleX(0.9907);"><span class="n1">1</span>0.00GSa/s</div>
<div class="t " style="left:1051.78px;top:9px;font-size:20px;line-height:20px;color:#f2f2f2;letter-spacing:0.000px;font-weight:bold;">T</div>
<div class="t " style="left:1142.96px;top:11px;font-size:17.5px;line-height:17.5px;color:#f2f2f2;letter-spacing:-0.077px;">Edge</div>
<div class="t " style="left:1198.95px;top:11px;font-size:17.5px;line-height:17.5px;color:#e8a010;letter-spacing:-0.613px;transform-origin:0 50%;transform:scaleX(0.8307);">C<span class="n1">1</span></div>
<div class="t " style="left:1270.55px;top:11px;font-size:17.5px;line-height:17.5px;color:#f2f2f2;letter-spacing:-0.613px;transform-origin:0 50%;transform:scaleX(0.9730);"><span class="n1">1</span>.982 V</div>
<div class="t " style="left:1525.96px;top:13px;font-size:15px;line-height:15px;color:#f2f2f2;letter-spacing:0.419px;-webkit-text-stroke:0.3px #f2f2f2;">Acq</div>
<div class="t " style="left:1537.16px;top:8px;font-size:7px;line-height:7px;color:#22b4e4;letter-spacing:0.266px;">Ultra</div>
<div class="t " style="left:1481.89px;top:6px;font-size:6px;line-height:6px;color:#f2f2f2;letter-spacing:0.389px;font-weight:bold;">FFT</div>
<div class="t " style="left:1409.35px;top:8px;font-size:6px;line-height:6px;color:#f2f2f2;letter-spacing:0.000px;font-weight:bold;">A</div>
<div class="t " style="left:1432.60px;top:27px;font-size:6px;line-height:6px;color:#f2f2f2;letter-spacing:0.000px;font-weight:bold;">B</div>
<div class="t " style="left:17.41px;top:49px;font-size:18px;line-height:18px;color:#f2f2f2;letter-spacing:0.049px;">Main Window</div>
<div class="t " style="left:9.69px;top:977px;font-size:18px;line-height:18px;color:#000;letter-spacing:-0.630px;transform-origin:0 50%;transform:scaleX(0.8737);">C<span class="n1">1</span></div>
<div class="t " style="left:71.22px;top:977px;font-size:18px;line-height:18px;color:#f2f2f2;letter-spacing:-0.493px;">DC<span class="n1">1</span>M</div>
<div class="t " style="left:34.30px;top:1005px;font-size:18px;line-height:18px;color:#dcdcdc;letter-spacing:0.468px;">2.00 V/div</div>
<div class="t " style="left:76.02px;top:1031px;font-size:18px;line-height:18px;color:#dcdcdc;letter-spacing:-0.306px;">FULL</div>
<div class="t " style="left:101.08px;top:1057px;font-size:18px;line-height:18px;color:#dcdcdc;letter-spacing:-0.630px;transform-origin:0 50%;transform:scaleX(0.8827);"><span class="n1">1</span>X</div>
<div class="t " style="left:131.48px;top:977px;font-size:18px;line-height:18px;color:#f2f2f2;letter-spacing:-0.495px;">C2</div>
<div class="t " style="left:196.21px;top:977px;font-size:18px;line-height:18px;color:#f2f2f2;letter-spacing:-0.492px;">DC<span class="n1">1</span>M</div>
<div class="t " style="left:154.03px;top:1005px;font-size:18px;line-height:18px;color:#dcdcdc;letter-spacing:0.084px;"><span class="n1">1</span>00 mV/div</div>
<div class="t " style="left:201.01px;top:1031px;font-size:18px;line-height:18px;color:#dcdcdc;letter-spacing:-0.306px;">FULL</div>
<div class="t " style="left:226.08px;top:1057px;font-size:18px;line-height:18px;color:#dcdcdc;letter-spacing:-0.630px;transform-origin:0 50%;transform:scaleX(0.8827);"><span class="n1">1</span>X</div>
<div class="t " style="left:256.48px;top:977px;font-size:18px;line-height:18px;color:#f2f2f2;letter-spacing:-0.607px;">C3</div>
<div class="t " style="left:321.21px;top:977px;font-size:18px;line-height:18px;color:#f2f2f2;letter-spacing:-0.492px;">DC<span class="n1">1</span>M</div>
<div class="t " style="left:279.03px;top:1005px;font-size:18px;line-height:18px;color:#dcdcdc;letter-spacing:0.084px;"><span class="n1">1</span>00 mV/div</div>
<div class="t " style="left:326.01px;top:1031px;font-size:18px;line-height:18px;color:#dcdcdc;letter-spacing:-0.306px;">FULL</div>
<div class="t " style="left:351.08px;top:1057px;font-size:18px;line-height:18px;color:#dcdcdc;letter-spacing:-0.630px;transform-origin:0 50%;transform:scaleX(0.8827);"><span class="n1">1</span>X</div>
<div class="t " style="left:381.49px;top:977px;font-size:18px;line-height:18px;color:#f2f2f2;letter-spacing:-0.630px;transform-origin:0 50%;transform:scaleX(0.9892);">C4</div>
<div class="t " style="left:446.21px;top:977px;font-size:18px;line-height:18px;color:#f2f2f2;letter-spacing:-0.492px;">DC<span class="n1">1</span>M</div>
<div class="t " style="left:404.03px;top:1005px;font-size:18px;line-height:18px;color:#dcdcdc;letter-spacing:0.084px;"><span class="n1">1</span>00 mV/div</div>
<div class="t " style="left:451.01px;top:1031px;font-size:18px;line-height:18px;color:#dcdcdc;letter-spacing:-0.306px;">FULL</div>
<div class="t " style="left:476.08px;top:1057px;font-size:18px;line-height:18px;color:#dcdcdc;letter-spacing:-0.630px;transform-origin:0 50%;transform:scaleX(0.8827);"><span class="n1">1</span>X</div>
<div class="t " style="left:508.52px;top:977px;font-size:18px;line-height:18px;color:#0a1400;letter-spacing:-0.630px;transform-origin:0 50%;transform:scaleX(0.8602);">B<span class="n1">1</span></div>
<div class="t " style="left:554.88px;top:977px;font-size:18px;line-height:18px;color:#f2f2f2;letter-spacing:-0.630px;transform-origin:0 50%;transform:scaleX(0.9927);">CAN-FD(Hex)</div>
<div class="t " style="left:508.89px;top:1027px;font-size:18px;line-height:18px;color:#f2f2f2;letter-spacing:-0.630px;transform-origin:0 50%;transform:scaleX(0.9832);">CAN_FDL ,C<span class="n1">1</span></div>
<div class="t " style="left:509.08px;top:1054px;font-size:18px;line-height:18px;color:#f2f2f2;letter-spacing:0.212px;">500.00kbps  74</div>
<div class="t " style="left:1590.84px;top:1017px;font-size:16.5px;line-height:16.5px;color:#f2f2f2;letter-spacing:0.635px;">Math+</div>
<div class="t " style="left:1667.04px;top:1017px;font-size:16.5px;line-height:16.5px;color:#f2f2f2;letter-spacing:0.019px;">Ref+</div>
<div class="t " style="left:1730.06px;top:1018px;font-size:15px;line-height:15px;color:#f2f2f2;letter-spacing:-0.338px;">Digital+</div>
<div class="t " style="left:1800.14px;top:1017px;font-size:16.5px;line-height:16.5px;color:#f2f2f2;letter-spacing:0.197px;">Bus+</div>
<div class="t " style="left:1876.32px;top:990px;font-size:16.5px;line-height:16.5px;color:#f2f2f2;letter-spacing:-0.578px;transform-origin:0 50%;transform:scaleX(0.9433);">G<span class="n1">1</span></div>
<div class="t " style="left:1875.71px;top:1047px;font-size:16.5px;line-height:16.5px;color:#f2f2f2;letter-spacing:-0.578px;transform-origin:0 50%;transform:scaleX(0.9606);">G2</div>
<div class="t " style="left:1584.05px;top:1042px;font-size:29px;line-height:29px;color:rgba(150,150,150,0.78);letter-spacing:0.023px;">2024-09-23 10:41:46</div>
<div class="t " style="left:38.86px;top:212px;font-size:18px;line-height:18px;color:#8fae45;letter-spacing:-0.630px;transform-origin:0 50%;transform:scaleX(0.9120);">CAN-FD</div>
<div class="t " style="left:10.98px;top:226px;font-size:12px;line-height:12px;color:#142800;letter-spacing:-0.420px;transform-origin:0 50%;transform:scaleX(0.9264);">B<span class="n1">1</span></div>
<div class="t " style="left:10.99px;top:489px;font-size:13px;line-height:13px;color:#f0a818;letter-spacing:-0.455px;transform-origin:0 50%;transform:scaleX(0.9213);">C<span class="n1">1</span></div>
<div class="t " style="left:510.93px;top:77px;font-size:12px;line-height:12px;color:#000;letter-spacing:0.000px;">T</div>
<div class="t " style="left:490.20px;top:220px;font-size:21px;line-height:21px;color:#fff;letter-spacing:0.000px;font-weight:bold;">S</div>
<div class="t " style="left:647.72px;top:220px;font-size:21px;line-height:21px;color:#fff;letter-spacing:-0.735px;font-weight:bold;transform-origin:0 50%;transform:scaleX(0.9676);">Standard ID:70Fh</div>
<div class="t " style="left:1145.82px;top:220px;font-size:21px;line-height:21px;color:#fff;letter-spacing:-0.735px;font-weight:bold;transform-origin:0 50%;transform:scaleX(0.9714);">...</div>
<div class="t " style="left:1176.42px;top:220px;font-size:21px;line-height:21px;color:#fff;letter-spacing:-0.735px;font-weight:bold;transform-origin:0 50%;transform:scaleX(0.9714);">...</div>
<div class="t " style="left:1207.02px;top:220px;font-size:21px;line-height:21px;color:#fff;letter-spacing:-0.735px;font-weight:bold;transform-origin:0 50%;transform:scaleX(0.9714);">...</div>
<div class="t " style="left:1237.62px;top:220px;font-size:21px;line-height:21px;color:#fff;letter-spacing:-0.735px;font-weight:bold;transform-origin:0 50%;transform:scaleX(0.9714);">...</div>
<div class="t " style="left:1268.22px;top:220px;font-size:21px;line-height:21px;color:#fff;letter-spacing:-0.735px;font-weight:bold;transform-origin:0 50%;transform:scaleX(0.9714);">...</div>
<div class="t " style="left:1346.58px;top:220px;font-size:21px;line-height:21px;color:#fff;letter-spacing:-0.699px;font-weight:bold;">...</div>
<div class="t " style="left:1415.16px;top:220px;font-size:21px;line-height:21px;color:#fff;letter-spacing:-0.565px;font-weight:bold;">0h</div>
<div class="t " style="left:1543.71px;top:220px;font-size:21px;line-height:21px;color:#fff;letter-spacing:-0.735px;font-weight:bold;transform-origin:0 50%;transform:scaleX(0.9119);">EOF:7Fh</div>
<div class="t " style="left:115.35px;top:895px;font-size:16px;line-height:16px;color:#8aaa3c;letter-spacing:-0.560px;transform-origin:0 50%;transform:scaleX(0.9022);-webkit-text-stroke:0.4px #8aaa3c;">-20µs</div>
<div class="t " style="left:307.61px;top:895px;font-size:16px;line-height:16px;color:#8aaa3c;letter-spacing:-0.560px;transform-origin:0 50%;transform:scaleX(0.8828);-webkit-text-stroke:0.4px #8aaa3c;">-<span class="n1">1</span>0µs</div>
<div class="t " style="left:508.10px;top:895px;font-size:16px;line-height:16px;color:#8aaa3c;letter-spacing:-0.560px;transform-origin:0 50%;transform:scaleX(0.8917);-webkit-text-stroke:0.4px #8aaa3c;">0s</div>
<div class="t " style="left:693.19px;top:895px;font-size:16px;line-height:16px;color:#8aaa3c;letter-spacing:-0.560px;transform-origin:0 50%;transform:scaleX(0.8488);-webkit-text-stroke:0.4px #8aaa3c;"><span class="n1">1</span>0µs</div>
<div class="t " style="left:883.50px;top:895px;font-size:16px;line-height:16px;color:#8aaa3c;letter-spacing:-0.560px;transform-origin:0 50%;transform:scaleX(0.8761);-webkit-text-stroke:0.4px #8aaa3c;">20µs</div>
<div class="t " style="left:1075.06px;top:895px;font-size:16px;line-height:16px;color:#8aaa3c;letter-spacing:-0.560px;transform-origin:0 50%;transform:scaleX(0.8712);-webkit-text-stroke:0.4px #8aaa3c;">30µs</div>
<div class="t " style="left:1266.69px;top:895px;font-size:16px;line-height:16px;color:#8aaa3c;letter-spacing:-0.560px;transform-origin:0 50%;transform:scaleX(0.8642);-webkit-text-stroke:0.4px #8aaa3c;">40µs</div>
<div class="t " style="left:1457.84px;top:895px;font-size:16px;line-height:16px;color:#8aaa3c;letter-spacing:-0.560px;transform-origin:0 50%;transform:scaleX(0.8717);-webkit-text-stroke:0.4px #8aaa3c;">50µs</div>
<div class="t " style="left:1649.08px;top:895px;font-size:16px;line-height:16px;color:#8aaa3c;letter-spacing:-0.560px;transform-origin:0 50%;transform:scaleX(0.8766);-webkit-text-stroke:0.4px #8aaa3c;">60µs</div>
<div class="t " style="left:1840.48px;top:895px;font-size:16px;line-height:16px;color:#8aaa3c;letter-spacing:-0.560px;transform-origin:0 50%;transform:scaleX(0.8766);-webkit-text-stroke:0.4px #8aaa3c;">70µs</div>
</body></html>
